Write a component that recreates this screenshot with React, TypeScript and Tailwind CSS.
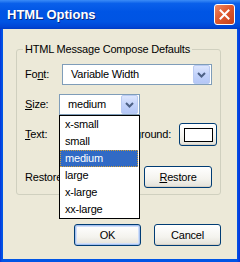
import React from "react";

function Chevron() {
  return (
    <svg width="9" height="6" viewBox="0 0 9 6">
      <path d="M1 1 L4.5 4.5 L8 1" fill="none" stroke="#4d6185" strokeWidth="2" />
    </svg>
  );
}

function DropBtn() {
  return (
    <div className="w-[17px] h-[19px] flex items-center justify-center rounded-[2px] border border-[#bacbf2] bg-[linear-gradient(180deg,#dde6fd_0%,#c3d3fb_50%,#b4c7f6_100%)]">
      <Chevron />
    </div>
  );
}

function XpButton({ children, className = "", def = false }: { children: React.ReactNode; className?: string; def?: boolean }) {
  return (
    <div
      className={
        "flex items-center justify-center rounded-[3px] border border-[#003c74] bg-[linear-gradient(180deg,#ffffff_0%,#f4f3ee_60%,#e3e1d8_100%)] " +
        (def ? "shadow-[inset_0_0_0_1px_#a6c1ee,inset_0_0_0_2px_#cfdefa] " : "shadow-[inset_0_-1px_0_#d6d0c5] ") +
        className
      }
    >
      {children}
    </div>
  );
}

export default function App() {
  const items = ["x-small", "small", "medium", "large", "x-large", "xx-large"];
  return (
    <div className="w-[240px] h-[262px] flex flex-col bg-[linear-gradient(90deg,#0831d9_0px,#0055e5_2px,#0055e5_237px,#0831d9_240px)] font-['Liberation_Sans',Arial,sans-serif] text-[11px] tracking-[-0.2px] text-black">
      <div className="h-[29px] shrink-0 flex items-center justify-between pl-[7px] pr-[4px] bg-[linear-gradient(180deg,#3b8cf7_0%,#0a60ea_12%,#0055e5_40%,#0054e3_75%,#0046d6_92%,#003bc4_100%)]">
        <span className="text-white font-bold text-[13px] tracking-normal [text-shadow:1px_1px_0_#0a2a80]">HTML Options</span>
        <div className="w-[21px] h-[21px] mr-[1px] rounded-[3px] border border-white flex items-center justify-center bg-[linear-gradient(135deg,#ef8a66_0%,#e05a30_45%,#c5401b_100%)]">
          <svg width="11" height="11" viewBox="0 0 11 11">
            <path d="M1.5 1.5 L9.5 9.5 M9.5 1.5 L1.5 9.5" stroke="white" strokeWidth="2" strokeLinecap="square" />
          </svg>
        </div>
      </div>
      <div className="flex-1 mx-[3px] mb-[3px] bg-[#ece9d8] flex flex-col">
        <div className="relative mt-[20px] ml-[13px] w-[205px] h-[146px] border border-[#d0d0bf] rounded-[3px] flex flex-col pl-[8px]">
          <span className="absolute left-[6px] top-[-8px] px-[2px] bg-[#ece9d8] leading-[14px]">HTML Message Compose Defaults</span>

          <div className="mt-[14px] flex items-center h-[21px]">
            <span className="w-[37px]">Fo<span className="underline">n</span>t:</span>
            <div className="w-[150px] h-[21px] border border-[#7f9db9] bg-white flex items-center justify-between pl-[8px] pr-[1px]">
              <span>Variable Width</span>
              <DropBtn />
            </div>
          </div>

          <div className="mt-[9px] flex items-center h-[21px]">
            <span className="w-[34px]"><span className="underline">S</span>ize:</span>
            <div className="w-[81px] h-[21px] border border-[#7f9db9] bg-white flex items-center justify-between pl-[8px] pr-[1px]">
              <span>medium</span>
              <DropBtn />
            </div>
          </div>

          <div className="mt-[8px] flex items-center h-[23px]">
            <span className="w-[37px]"><span className="underline">T</span>ext:</span>
            <XpButton className="w-[37px] h-[23px]">
              <div className="w-[28px] h-[13px] border border-black bg-black" />
            </XpButton>
            <span className="ml-auto mr-[8px]"><span className="underline">B</span>ackground:</span>
            <XpButton className="w-[38px] h-[23px] mr-[3px]">
              <div className="w-[29px] h-[14px] border border-black bg-white" />
            </XpButton>
          </div>

          <div className="mt-[20px] flex items-center h-[22px]">
            <span className="w-[34px] overflow-hidden whitespace-nowrap">Restore defaults:</span>
            <XpButton className="ml-auto mr-[8px] w-[68px] h-[22px]">
              <span><span className="underline">R</span>estore</span>
            </XpButton>
          </div>

          <div className="absolute left-[42px] top-[65px] w-[81px] h-[104px] border border-black bg-white flex flex-col">
            {items.map((it) => (
              <div
                key={it}
                className={
                  "h-[17px] shrink-0 flex items-center pl-[5px] " +
                  (it === "medium" ? "bg-[#316ac5] text-white outline outline-1 outline-dotted outline-[#ce9e3a] -outline-offset-1 mr-[1px]" : "")
                }
              >
                {it}
              </div>
            ))}
          </div>
        </div>

        <div className="mt-[29px] flex justify-end gap-[13px] pr-[16px]">
          <XpButton def className="w-[67px] h-[22px]">OK</XpButton>
          <XpButton className="w-[67px] h-[22px]">Cancel</XpButton>
        </div>
      </div>
    </div>
  );
}
